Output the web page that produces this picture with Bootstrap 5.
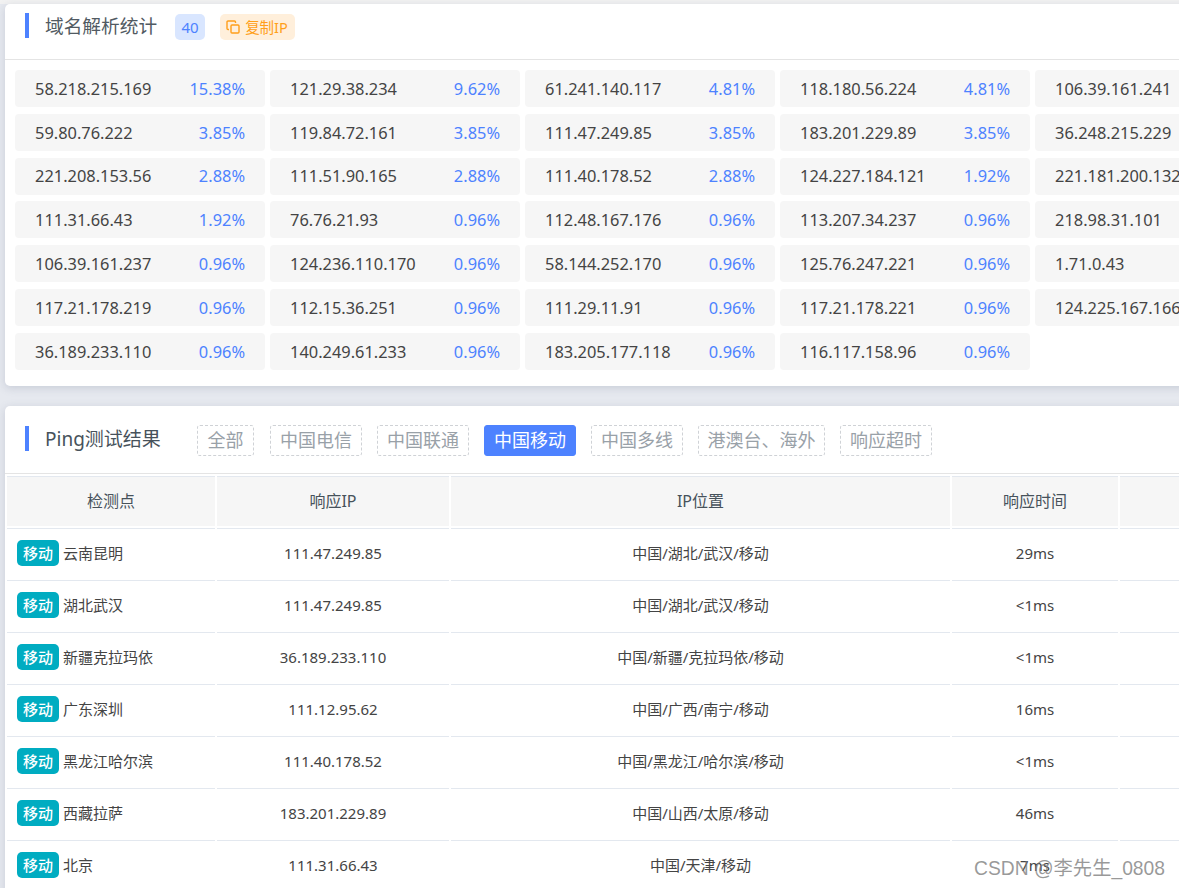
<!DOCTYPE html>
<html lang="zh-CN">
<head>
<meta charset="utf-8">
<title>域名解析统计</title>
<link rel="stylesheet" href="https://cdn.jsdelivr.net/npm/bootstrap@5.3.0/dist/css/bootstrap.min.css">
<style>
html,body{height:888px;overflow:hidden}
body{background:#e6e9ef;font-family:"Noto Sans","Noto Sans CJK SC",sans-serif;color:#3c4043;position:relative}
.page-strip{height:4px;background:#f2f2f2}
.canvas{width:1400px;padding-left:5px;display:flex;flex-direction:column;gap:20px}
.panel{background:#fff;border-radius:5px 0 0 5px;box-shadow:0 2px 8px rgba(90,100,130,.22)}
.stat-head{height:56px;padding:9px 0 0 20px;border-bottom:1px solid #e4e4e4;align-items:flex-start}
.accent{width:4px;height:25px;background:#4d82ff}
.panel-title{font-size:18.7px;line-height:25px;color:#515a62;margin-left:16px}
.count-tag{width:30px;height:26px;margin-left:18px;margin-top:1px;background:#d9e6ff;color:#4d82ff;border-radius:5px;font-size:15px;line-height:26px;text-align:center}
.copy-tag{width:75px;height:26px;margin-left:15px;margin-top:1px;background:#ffefdb;color:#ff9f1a;border-radius:5px;font-size:14.5px;line-height:26px;gap:5px;padding-left:6px;white-space:nowrap}
.ip-grid{display:grid;grid-template-columns:repeat(5,250px);grid-auto-rows:37px;column-gap:5px;row-gap:6.83px;padding:10px 0 16px 10px}
.ip-cell{background:#f6f6f6;border-radius:4px;padding:1px 20px 0;font-size:16.4px;color:#444}
.ip-rate{color:#4d82ff}
.ping-head{height:68px;padding:19px 0 0 20px;border-bottom:1px solid #e4e4e4;align-items:flex-start}
.ping-head .accent{margin-top:1px}
.ping-head .panel-title{font-size:19px;line-height:28px;width:152px;flex:none;margin-right:0;color:#47525b}
.filter-list{gap:15px}
.filter-btn{height:31px;padding:0 9px;font-size:18px;line-height:29px;border:1px dashed #cfd2d6;border-radius:3px;color:#99a1a8;background:#fff;text-align:center}
.filter-btn.is-on{background:#4d82ff;border:1px solid #4d82ff;color:#fff}
.filter-all{width:57px;margin-right:1px}
.filter-wide{width:127px;padding:0}
.ping-wrap{padding:2px 0 0 0}
.ping-table{table-layout:fixed;border-collapse:separate;border-spacing:2px 0;width:1390px;font-size:15px;color:#444;margin:0}
.ping-table th{height:53px;background:#f6f6f6;background-clip:content-box;font-weight:400;font-size:16px;color:#47525b;text-align:center;vertical-align:middle;border-top:1px solid #e3e8ef;border-bottom:1px solid #e3e8ef;padding:0 0 2px}
.ping-table td{height:52px;text-align:center;vertical-align:middle;border-bottom:1px solid #e3e8ef;border-top:0;padding:0 0 2px}
.ping-table td.site{text-align:left;padding-left:10px;white-space:nowrap}
.isp-tag{display:inline-block;width:42px;height:26px;line-height:26px;background:#00acc1;color:#fff;border-radius:5px;text-align:center;font-size:15px;font-weight:500;margin-right:4px}
.mark-water{position:absolute;left:974px;top:856px;font-family:"Liberation Sans","Noto Sans CJK SC",sans-serif;font-size:19.3px;line-height:25px;color:rgba(120,120,120,.75);white-space:nowrap}
</style>
</head>
<body>
<div class="page-strip"></div>
<div class="canvas">
  <section class="panel">
    <div class="stat-head d-flex">
      <span class="accent"></span>
      <span class="panel-title">域名解析统计</span>
      <span class="count-tag">40</span>
      <span class="copy-tag d-flex align-items-center">
        <svg width="14" height="14" viewBox="0 0 14 14" fill="none" stroke="#ff9f1a" stroke-width="1.4"><rect x="5" y="5" width="8" height="8" rx="1"/><path d="M3 9.5H2a1 1 0 0 1-1-1V2a1 1 0 0 1 1-1h6.5a1 1 0 0 1 1 1v1"/></svg>
        <span>复制IP</span>
      </span>
    </div>
    <div class="ip-grid" id="ips"></div>
  </section>
  <section class="panel">
    <div class="ping-head d-flex">
      <span class="accent"></span>
      <span class="panel-title">Ping测试结果</span>
      <div class="filter-list d-flex">
        <span class="filter-btn filter-all">全部</span>
        <span class="filter-btn">中国电信</span>
        <span class="filter-btn">中国联通</span>
        <span class="filter-btn is-on">中国移动</span>
        <span class="filter-btn">中国多线</span>
        <span class="filter-btn filter-wide">港澳台、海外</span>
        <span class="filter-btn">响应超时</span>
      </div>
    </div>
    <div class="ping-wrap">
      <table class="ping-table">
        <colgroup><col style="width:208px"><col style="width:232px"><col style="width:499px"><col style="width:166px"><col></colgroup>
        <thead><tr><th>检测点</th><th>响应IP</th><th>IP位置</th><th>响应时间</th><th></th></tr></thead>
        <tbody id="rows"></tbody>
      </table>
    </div>
  </section>
</div>
<div class="mark-water">CSDN @李先生_0808</div>
<script>
const ips=[["58.218.215.169","15.38%"],["121.29.38.234","9.62%"],["61.241.140.117","4.81%"],["118.180.56.224","4.81%"],["106.39.161.241","4.81%"],
["59.80.76.222","3.85%"],["119.84.72.161","3.85%"],["111.47.249.85","3.85%"],["183.201.229.89","3.85%"],["36.248.215.229","2.88%"],
["221.208.153.56","2.88%"],["111.51.90.165","2.88%"],["111.40.178.52","2.88%"],["124.227.184.121","1.92%"],["221.181.200.132","1.92%"],
["111.31.66.43","1.92%"],["76.76.21.93","0.96%"],["112.48.167.176","0.96%"],["113.207.34.237","0.96%"],["218.98.31.101","0.96%"],
["106.39.161.237","0.96%"],["124.236.110.170","0.96%"],["58.144.252.170","0.96%"],["125.76.247.221","0.96%"],["1.71.0.43","0.96%"],
["117.21.178.219","0.96%"],["112.15.36.251","0.96%"],["111.29.11.91","0.96%"],["117.21.178.221","0.96%"],["124.225.167.166","0.96%"],
["36.189.233.110","0.96%"],["140.249.61.233","0.96%"],["183.205.177.118","0.96%"],["116.117.158.96","0.96%"]];
document.getElementById("ips").innerHTML=ips.map(r=>`<div class="ip-cell d-flex justify-content-between align-items-center"><span>${r[0]}</span><span class="ip-rate">${r[1]}</span></div>`).join("");
const rows=[["云南昆明","111.47.249.85","中国/湖北/武汉/移动","29ms"],["湖北武汉","111.47.249.85","中国/湖北/武汉/移动","<1ms"],["新疆克拉玛依","36.189.233.110","中国/新疆/克拉玛依/移动","<1ms"],["广东深圳","111.12.95.62","中国/广西/南宁/移动","16ms"],["黑龙江哈尔滨","111.40.178.52","中国/黑龙江/哈尔滨/移动","<1ms"],["西藏拉萨","183.201.229.89","中国/山西/太原/移动","46ms"],["北京","111.31.66.43","中国/天津/移动","7ms"]];
document.getElementById("rows").innerHTML=rows.map(r=>`<tr><td class="site"><span class="isp-tag">移动</span>${r[0]}</td><td>${r[1]}</td><td>${r[2]}</td><td>${r[3].replace("<","&lt;")}</td><td></td></tr>`).join("");
</script>
<script src="https://cdn.jsdelivr.net/npm/bootstrap@5.3.0/dist/js/bootstrap.bundle.min.js"></script>
</body>
</html>
